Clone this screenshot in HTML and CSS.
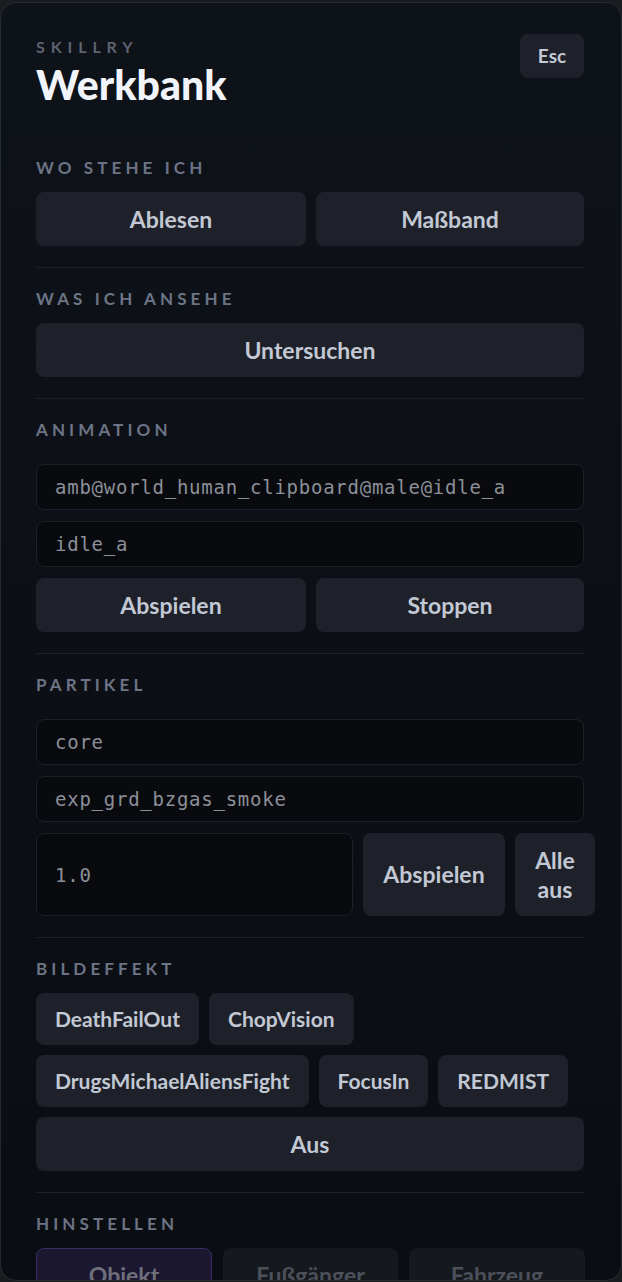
FILE: index.html
```html
<!DOCTYPE html>
<html lang="de">
<head>
<meta charset="utf-8">
<title>Skillry Werkbank</title>
<link rel="stylesheet" href="styles.css">
</head>
<body>
<div class="panel">
  <header class="head">
    <div class="brand">
      <div class="brand-name">SKILLRY</div>
      <h1 class="title">Werkbank</h1>
    </div>
    <button class="btn esc">Esc</button>
  </header>

  <section class="section">
    <div class="label">WO STEHE ICH</div>
    <div class="row two">
      <button class="btn">Ablesen</button>
      <button class="btn">Maßband</button>
    </div>
  </section>

  <section class="section">
    <div class="label">WAS ICH ANSEHE</div>
    <button class="btn wide">Untersuchen</button>
  </section>

  <section class="section">
    <div class="label">ANIMATION</div>
    <div class="stack">
      <div class="input">amb@world_human_clipboard@male@idle_a</div>
      <div class="input">idle_a</div>
      <div class="row two">
        <button class="btn">Abspielen</button>
        <button class="btn">Stoppen</button>
      </div>
    </div>
  </section>

  <section class="section">
    <div class="label">PARTIKEL</div>
    <div class="stack">
      <div class="input">core</div>
      <div class="input">exp_grd_bzgas_smoke</div>
      <div class="row three">
        <div class="input tall">1.0</div>
        <button class="btn">Abspielen</button>
        <button class="btn">Alle aus</button>
      </div>
    </div>
  </section>

  <section class="section">
    <div class="label">BILDEFFEKT</div>
    <div class="chips">
      <button class="btn chip">DeathFailOut</button>
      <button class="btn chip">ChopVision</button>
      <button class="btn chip">DrugsMichaelAliensFight</button>
      <button class="btn chip">FocusIn</button>
      <button class="btn chip">REDMIST</button>
    </div>
    <button class="btn wide off">Aus</button>
  </section>

  <section class="section">
    <div class="label">HINSTELLEN</div>
    <div class="row tri">
      <button class="btn tab active">Objekt</button>
      <button class="btn tab">Fußgänger</button>
      <button class="btn tab">Fahrzeug</button>
    </div>
  </section>
</div>
</body>
</html>
```

FILE: styles.css
```css
* { box-sizing: border-box; }

html, body {
  margin: 0;
  padding: 0;
  background: #1a1c20;
}

body {
  padding-top: 2px;
  font-family: Lato, "Noto Sans", sans-serif;
  overflow: hidden;
}

.panel {
  width: 622px;
  height: 1279px;
  border: 1px solid #262b33;
  border-radius: 16px;
  overflow: hidden;
  background: linear-gradient(180deg, #0e1219 0%, #0c1016 50%, #0a0d12 100%);
  padding: 31px 37px 0 35px;
}

.head {
  display: flex;
  justify-content: space-between;
  align-items: flex-start;
  margin-bottom: 30px;
}

.brand { margin-top: 4px; }

.brand-name {
  font-size: 16px;
  line-height: 18px;
  font-weight: 700;
  letter-spacing: 5.9px;
  color: #5d636f;
}

.title {
  margin: 6px 0 0;
  font-size: 41px;
  line-height: 45px;
  font-weight: 900;
  color: #f1f4fa;
}

.btn {
  display: flex;
  align-items: center;
  justify-content: center;
  height: 54px;
  border: none;
  border-radius: 8px;
  background: #1e2129;
  color: #c2c8d4;
  font-family: Lato, "Noto Sans", sans-serif;
  font-size: 23px;
  font-weight: 700;
  padding: 0 20px;
  line-height: 1.22;
  text-align: center;
}

.esc {
  width: 64px;
  height: 44px;
  padding: 0;
  font-size: 19px;
}

.section {
  border-top: 1px solid #1c2028;
  padding: 21px 0;
}

.head + .section { border-top: none; }

.label {
  font-size: 17px;
  line-height: 20px;
  font-weight: 700;
  letter-spacing: 4.1px;
  color: #6c7485;
  margin-bottom: 14px;
}

.row { display: grid; gap: 10px; }
.row.two { grid-template-columns: 270px 268px; }
.row.three { grid-template-columns: 317px 142px 80px; height: 83px; }
.row.three .btn { height: 83px; }
.row.tri { grid-template-columns: 176px 175px 176px; gap: 11px; }

.wide { width: 100%; }

.stack {
  display: flex;
  flex-direction: column;
  gap: 11px;
  padding-top: 10px;
}

.input {
  height: 46px;
  border: 1px solid #1c2028;
  border-radius: 8px;
  background: #080a0e;
  color: #8c9099;
  font-family: "DejaVu Sans Mono", "Liberation Mono", monospace;
  font-size: 19px;
  letter-spacing: 0.75px;
  padding: 0 18px;
  display: flex;
  align-items: center;
  white-space: nowrap;
}

.input.tall { height: 83px; }

.chips {
  display: flex;
  flex-wrap: wrap;
  gap: 10px;
  margin-bottom: 10px;
}

.chip {
  height: 52px;
  font-size: 21px;
  padding: 0 19px;
}

.tab {
  background: #15181d;
  color: #4b505b;
}

.tab.active {
  background: #1b1730;
  border: 1px solid #3d2e66;
  color: #6e6f7b;
}
```
